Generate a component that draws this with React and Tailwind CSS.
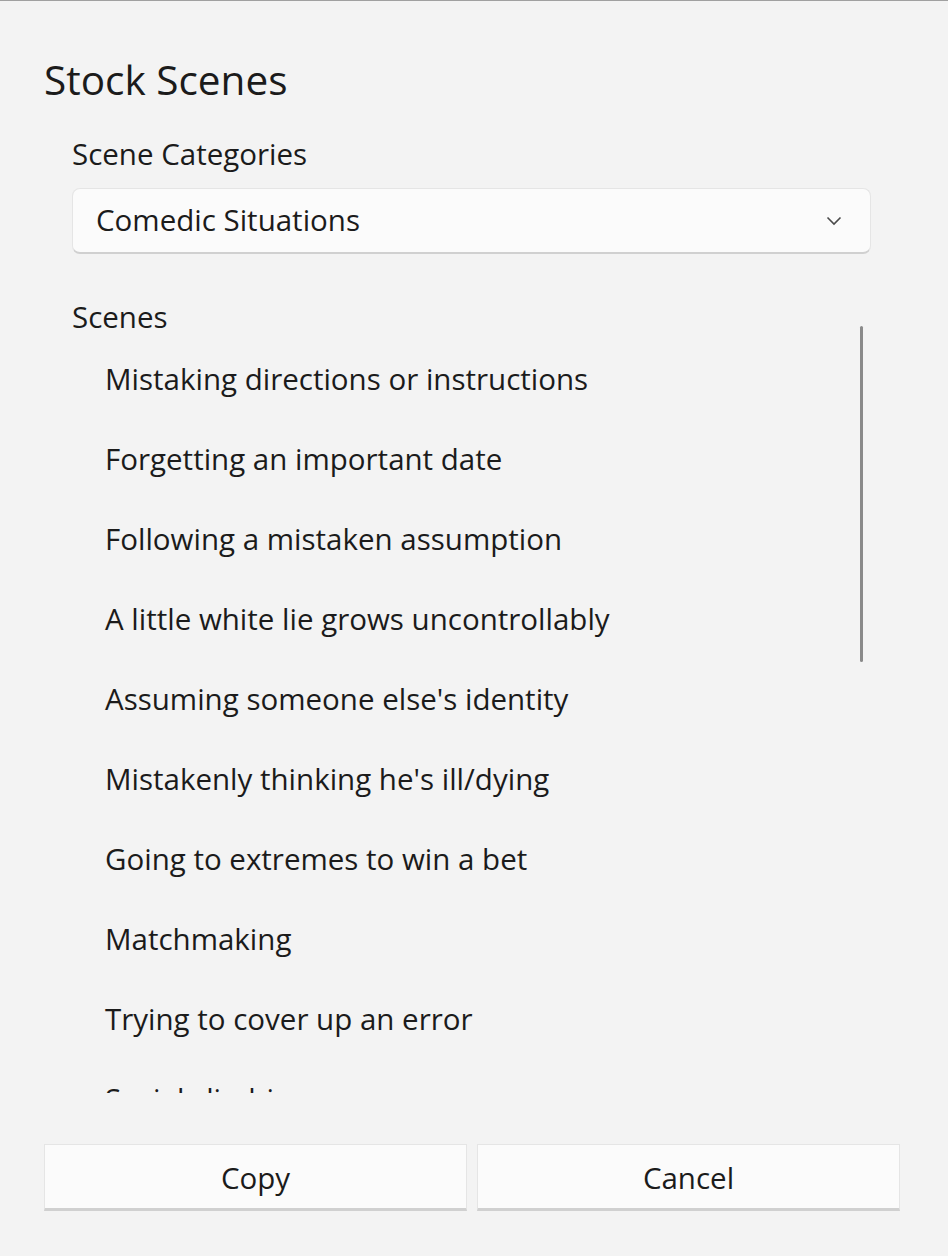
import React from "react";

const scenes = [
  "Mistaking directions or instructions",
  "Forgetting an important date",
  "Following a mistaken assumption",
  "A little white lie grows uncontrollably",
  "Assuming someone else's identity",
  "Mistakenly thinking he's ill/dying",
  "Going to extremes to win a bet",
  "Matchmaking",
  "Trying to cover up an error",
  "Social climbing",
];

export default function App() {
  return (
    <div
      className="w-[948px] h-[1256px] bg-[#f3f3f3] text-[#1b1b1b] border-t border-[#a0a0a0] flex flex-col overflow-hidden"
      style={{ fontFamily: '"Open Sans", "Noto Sans", sans-serif' }}
    >
      <h1 className="ml-[44px] mt-[53px] h-[52px] leading-[52px] text-[40.5px] font-normal">Stock Scenes</h1>
      <div className="ml-[72px] mr-[77px] flex flex-col">
        <div className="mt-[30px] h-[36px] leading-[36px] text-[29.5px]">Scene Categories</div>
        <div className="mt-[16px] h-[66px] rounded-[8px] bg-[#fbfbfb] border border-[#e5e5e5] border-b-[#d0d0d0] border-b-2 flex items-center justify-between pl-[23px] pr-[28px]">
          <span className="text-[29.5px]">Comedic Situations</span>
          <svg width="16" height="10" viewBox="0 0 16 10" fill="none">
            <path d="M1.5 1.5 L8 8 L14.5 1.5" stroke="#4a4a4a" strokeWidth="1.6" />
          </svg>
        </div>
        <div className="mt-[45px] h-[36px] leading-[36px] text-[29.5px]">Scenes</div>
      </div>
      <div className="relative ml-[72px] mr-[77px] mt-[4px] h-[754px]">
        <div className="h-full overflow-hidden">
          {scenes.map((s) => (
            <div key={s} className="h-[80px] flex items-center pl-[33px] text-[29.5px]">
              {s}
            </div>
          ))}
        </div>
        <div className="absolute right-[8px] top-[-13px] w-[3px] h-[336px] rounded-full bg-[#8a8a8a]" />
      </div>
      <div className="mt-[51px] ml-[44px] flex gap-[10px]">
        <button className="w-[423px] h-[67px] pt-[3px] bg-[#fbfbfb] border border-[#e5e5e5] border-b-[3px] border-b-[#d0d0d0] text-[29.5px] flex items-center justify-center">
          Copy
        </button>
        <button className="w-[423px] h-[67px] pt-[3px] bg-[#fbfbfb] border border-[#e5e5e5] border-b-[3px] border-b-[#d0d0d0] text-[29.5px] flex items-center justify-center">
          Cancel
        </button>
      </div>
    </div>
  );
}
